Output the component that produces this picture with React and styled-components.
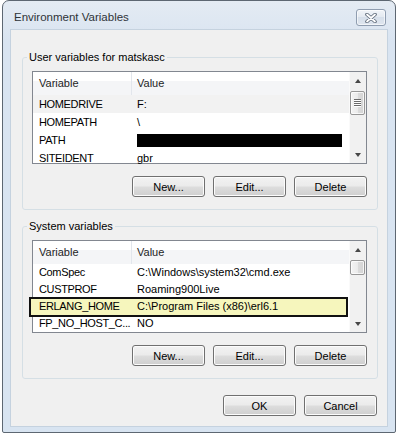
import React from 'react'
import styled, { createGlobalStyle } from 'styled-components'

const FONT = '"Liberation Sans", Arial, sans-serif'

const GlobalStyle = createGlobalStyle`
  html, body {
    margin: 0;
    padding: 0;
    background: #fff;
  }
  body {
    font-family: ${FONT};
    font-size: 11px;
    color: #000;
  }
  * {
    box-sizing: border-box;
  }
`

const Window = styled.div`
  width: 394px;
  height: 433px;
  margin-left: 2px;
  border: 1px solid #5d6772;
  border-radius: 7px 7px 2px 2px;
  background: linear-gradient(#e4ebf3, #d9e4f1 40px, #d8e4f1);
  display: flex;
  flex-direction: column;
  overflow: hidden;
`

const TitleBar = styled.div`
  height: 28px;
  flex: none;
  display: flex;
  align-items: flex-start;
  justify-content: space-between;
  padding: 0 9px 0 11px;
`

const Title = styled.div`
  font-size: 11.5px;
  line-height: 17px;
  margin-top: 8px;
  color: #2e3338;
`

const CloseButton = styled.div`
  width: 30px;
  height: 17px;
  margin-top: 8px;
  border: 1px solid #8f9db0;
  border-radius: 3px;
  background: linear-gradient(#f1f4f8, #e3e9f0 50%, #d6dfea 50%, #dfe6ef);
  box-shadow: inset 0 0 0 1px rgba(255, 255, 255, 0.6);
  display: flex;
  align-items: center;
  justify-content: center;
`

const Client = styled.div`
  flex: 1;
  margin: 0 7px 5px 7px;
  background: #f0f0f0;
  border: 1px solid #c5d2df;
  padding: 20px 9px 0 11px;
  display: flex;
  flex-direction: column;
`

const Group = styled.fieldset`
  margin: ${p => p.$top || 0}px 0 0 0;
  padding: 7px 10px 12px 9px;
  border: 1px solid #d5dfe5;
  border-radius: 3px;
  min-width: 0;
`

const Legend = styled.legend`
  padding: 0 2px;
  margin-left: -5px;
  line-height: 14px;
`

const List = styled.div`
  height: 93px;
  border: 1px solid #828790;
  background: #fff;
  display: flex;
`

const ListBody = styled.div`
  flex: 1;
  min-width: 0;
`

const Header = styled.div`
  display: grid;
  grid-template-columns: 99px 1fr;
  height: 23px;
  background: linear-gradient(#fff 0, #fff 38%, #f4f5f7 38%, #f4f5f7 100%);
`

const HeaderCell = styled.div`
  line-height: 23px;
  padding-left: ${p => (p.$first ? 6 : 5)}px;
  color: #1e1e1e;
  border-right: ${p => (p.$first ? '1px solid #e2e6ec' : 'none')};
`

const Row = styled.div`
  position: relative;
  display: grid;
  grid-template-columns: 99px 1fr;
  height: ${p => p.$height}px;
  line-height: ${p => p.$height}px;
  background: ${p => (p.$selected ? '#f2f2f2' : 'transparent')};

  &::before {
    content: '';
    display: ${p => (p.$marked ? 'block' : 'none')};
    position: absolute;
    left: -4px;
    right: 1px;
    top: -1px;
    bottom: -2px;
    background: #f6f6bd;
    border: 2px solid #111;
    z-index: 0;
  }
`

const Cell = styled.div`
  position: relative;
  z-index: 1;
  padding-left: ${p => (p.$first ? 6 : 5)}px;
  letter-spacing: ${p => (p.$first ? '-0.35px' : 'normal')};
  white-space: nowrap;
  overflow: hidden;
`

const Redacted = styled.span`
  display: inline-block;
  width: 205px;
  height: 13px;
  background: #000;
  vertical-align: middle;
  margin-top: -2px;
`

const ScrollBar = styled.div`
  width: 17px;
  flex: none;
  display: flex;
  flex-direction: column;
  background: #f1f1f1;
  border-left: 1px solid #fafafa;
`

const ArrowButton = styled.div`
  height: 17px;
  flex: none;
  display: flex;
  align-items: center;
  justify-content: center;

  &::after {
    content: '';
    width: 0;
    height: 0;
    border-left: 3.5px solid transparent;
    border-right: 3.5px solid transparent;
    ${p => (p.$down ? 'border-top' : 'border-bottom')}: 4px solid #474747;
  }
`

const Track = styled.div`
  flex: 1;
`

const Thumb = styled.div`
  height: ${p => p.$height}px;
  margin: 2px 1px 0 0;
  border: 1px solid #979797;
  border-radius: 2px;
  background: linear-gradient(to right, #f4f4f4, #ebebeb 50%, #dcdcdc 50%, #d4d4d4);
  box-shadow: inset 0 0 0 1px rgba(255, 255, 255, 0.75);
  display: flex;
  align-items: center;
  justify-content: center;
`

const Grip = styled.div`
  width: 7px;
  height: 8px;
  background: repeating-linear-gradient(#6b6b6b 0, #6b6b6b 1px, #fff 1px, #fff 2px);
`

const ButtonRow = styled.div`
  display: flex;
  justify-content: flex-end;
  gap: 8px;
  margin-top: ${p => p.$top}px;
  margin-right: ${p => p.$right || 0}px;
`

const Button = styled.button`
  width: 73px;
  height: 21px;
  padding: 0;
  font: inherit;
  color: #000;
  border: 1px solid #707070;
  border-radius: 3px;
  background: linear-gradient(#f2f2f2, #ebebeb 48%, #dddddd 52%, #cfcfcf);
  box-shadow: inset 0 0 0 1px #fcfcfc;
`

const userVars = [
  { name: 'HOMEDRIVE', value: 'F:', selected: true },
  { name: 'HOMEPATH', value: '\\' },
  { name: 'PATH', hidden: true },
  { name: 'SITEIDENT', value: 'gbr' },
]

const systemVars = [
  { name: 'ComSpec', value: 'C:\\Windows\\system32\\cmd.exe' },
  { name: 'CUSTPROF', value: 'Roaming900Live' },
  { name: 'ERLANG_HOME', value: 'C:\\Program Files (x86)\\erl6.1', marked: true },
  { name: 'FP_NO_HOST_C...', value: 'NO' },
]

function VarList({ rows, rowHeight, thumb, grip }) {
  return (
    <List>
      <ListBody>
        <Header>
          <HeaderCell $first>Variable</HeaderCell>
          <HeaderCell>Value</HeaderCell>
        </Header>
        {rows.map(r => (
          <Row key={r.name} $height={rowHeight} $selected={r.selected} $marked={r.marked}>
            <Cell $first>{r.name}</Cell>
            <Cell>{r.hidden ? <Redacted /> : r.value}</Cell>
          </Row>
        ))}
      </ListBody>
      <ScrollBar>
        <ArrowButton />
        <Track>
          <Thumb $height={thumb}>{grip && <Grip />}</Thumb>
        </Track>
        <ArrowButton $down />
      </ScrollBar>
    </List>
  )
}

function VarGroup({ title, top, ...listProps }) {
  return (
    <Group $top={top}>
      <Legend>{title}</Legend>
      <VarList {...listProps} />
      <ButtonRow $top={12}>
        <Button>New...</Button>
        <Button>Edit...</Button>
        <Button>Delete</Button>
      </ButtonRow>
    </Group>
  )
}

export default function App() {
  return (
    <>
      <GlobalStyle />
      <Window>
        <TitleBar>
          <Title>Environment Variables</Title>
          <CloseButton>
            <svg width="12" height="10" viewBox="0 0 12 10">
              <path d="M2 1.5 L10 8.5 M10 1.5 L2 8.5" stroke="#5f6b7a" strokeWidth="3.6" strokeLinecap="round" />
              <path d="M2 1.5 L10 8.5 M10 1.5 L2 8.5" stroke="#fff" strokeWidth="1.8" strokeLinecap="round" />
            </svg>
          </CloseButton>
        </TitleBar>
        <Client>
          <VarGroup title="User variables for matskasc" rows={userVars} rowHeight={18} thumb={24} grip />
          <VarGroup title="System variables" top={9} rows={systemVars} rowHeight={17} thumb={15} />
          <ButtonRow $top={16} $right={1}>
            <Button>OK</Button>
            <Button>Cancel</Button>
          </ButtonRow>
        </Client>
      </Window>
    </>
  )
}
